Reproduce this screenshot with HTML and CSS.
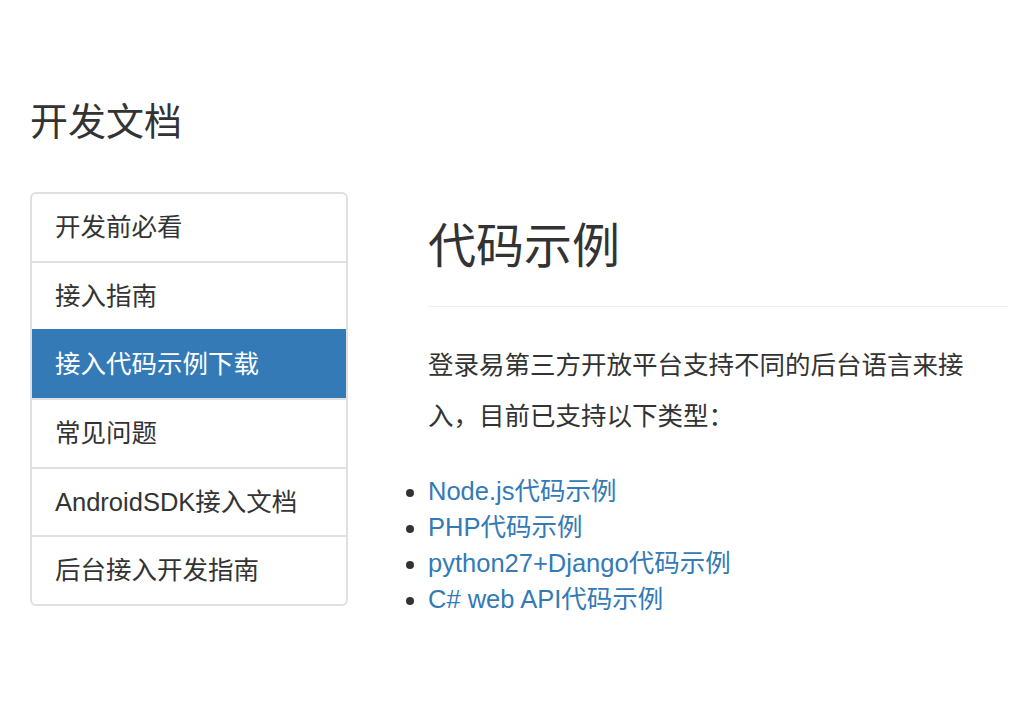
FILE: index.html
```html
<!DOCTYPE html>
<html lang="zh-CN">
<head>
<meta charset="utf-8">
<title>开发文档</title>
<link rel="stylesheet" href="styles.css">
</head>
<body>
<div class="page">
  <h1 class="title">开发文档</h1>
  <div class="row">
    <nav class="side-nav">
      <a class="nav-item" href="#">开发前必看</a>
      <a class="nav-item" href="#">接入指南</a>
      <a class="nav-item active" href="#">接入代码示例下载</a>
      <a class="nav-item" href="#">常见问题</a>
      <a class="nav-item" href="#">AndroidSDK接入文档</a>
      <a class="nav-item" href="#">后台接入开发指南</a>
    </nav>
    <main class="content">
      <h2 class="heading">代码示例</h2>
      <hr class="divider">
      <p class="intro">登录易第三方开放平台支持不同的后台语言来接入，目前已支持以下类型：</p>
      <ul class="links">
        <li><a href="#">Node.js代码示例</a></li>
        <li><a href="#">PHP代码示例</a></li>
        <li><a href="#">python27+Django代码示例</a></li>
        <li><a href="#">C# web API代码示例</a></li>
      </ul>
    </main>
  </div>
</div>
</body>
</html>
```

FILE: styles.css
```css
html, body {
  margin: 0;
  padding: 0;
  background: #fff;
}
body {
  font-family: "Liberation Sans", "Noto Sans CJK SC", sans-serif;
  color: #333;
}
.page {
  padding: 100px 22px 0 30px;
}
.title {
  margin: 0 0 48px 0;
  font-size: 38px;
  line-height: 44px;
  font-weight: normal;
}
.row {
  display: flex;
  align-items: flex-start;
}
.side-nav {
  width: 318px;
  box-sizing: border-box;
  border: 2px solid #e0e0e0;
  border-radius: 6px;
  overflow: hidden;
  display: flex;
  flex-direction: column;
  flex-shrink: 0;
}
.nav-item {
  display: block;
  height: 66.7px;
  line-height: 66.7px;
  padding: 0 23px;
  font-size: 25.5px;
  color: #333;
  text-decoration: none;
  border-top: 2px solid #e0e0e0;
}
.nav-item:first-child {
  border-top: none;
}
.nav-item.active {
  background: #337ab7;
  border-top-color: #337ab7;
  color: #fff;
}
.content {
  margin-left: 80px;
  width: 580px;
}
.heading {
  margin: 27px 0 0 0;
  font-size: 48px;
  line-height: 56px;
  font-weight: normal;
}
.divider {
  margin: 31px 0 0 0;
  border: none;
  border-top: 1px solid #eee;
  height: 0;
}
.intro {
  margin: 33px 0 0 0;
  font-size: 25.5px;
  line-height: 51px;
}
.links {
  margin: 31px 0 0 0;
  padding: 0;
  font-size: 25.5px;
  line-height: 36px;
}
.links a {
  color: #337ab7;
  text-decoration: none;
}
```
